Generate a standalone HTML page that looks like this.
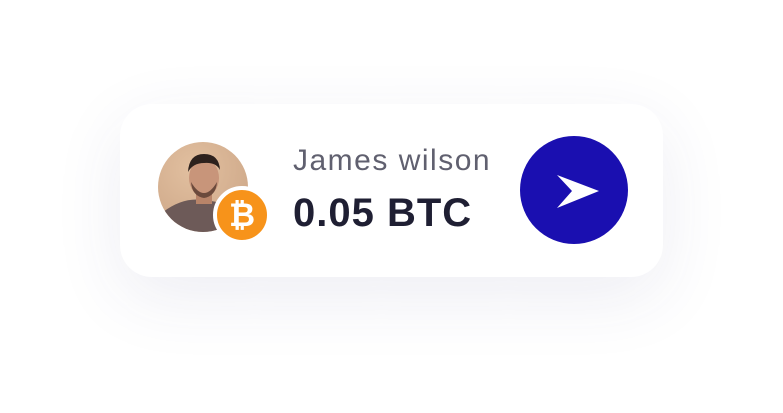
<!DOCTYPE html>
<html><head><style>
html,body{margin:0;padding:0;background:#fff;width:783px;height:413px;overflow:hidden;font-family:"Liberation Sans",sans-serif}
.card{position:absolute;left:120px;top:104px;width:543px;height:173px;background:#fff;border-radius:32px;box-shadow:0 20px 70px rgba(60,60,120,0.09)}
.av{position:absolute;left:158px;top:142px;width:90px;height:90px;border-radius:50%;overflow:hidden;background:radial-gradient(circle at 40% 30%,#e2c0a0,#c9a283)}
.badge{position:absolute;left:213px;top:186px;width:50px;height:50px;border-radius:50%;background:#f7931a;border:4px solid #fff;color:#fff;font-weight:bold;font-size:32px;text-align:center;line-height:50px}
.name{position:absolute;left:293px;top:144px;font-size:30px;color:#60606f;letter-spacing:1.5px}
.amt{position:absolute;left:293px;top:191px;font-size:40px;font-weight:bold;color:#1f1f33;letter-spacing:1px}
.btn{position:absolute;left:520px;top:136px;width:108px;height:108px;border-radius:50%;background:#1a0fb0}
</style></head><body>
<div class="card"></div>
<div class="av">
<svg width="90" height="90" viewBox="0 0 90 90">
<path d="M0 90 L5 70 Q25 55 45 58 Q70 60 85 72 L90 90Z" fill="#6d5a58"/>
<rect x="38" y="48" width="16" height="14" fill="#b88469"/>
<ellipse cx="46" cy="36" rx="15" ry="19" fill="#c8957a"/>
<path d="M30 30 Q31 12 46 12 Q61 12 62 28 Q58 20 46 21 Q35 21 30 30Z" fill="#2d211d"/>
<path d="M33 40 Q46 62 59 40 Q58 54 46 56 Q34 54 33 40Z" fill="#6b4a3c"/>
</svg>
</div>
<div class="badge">₿</div>
<div class="name">James wilson</div>
<div class="amt">0.05 BTC</div>
<div class="btn"><svg width="108" height="108" viewBox="0 0 108 108"><path d="M37 39 L79 55 L37 72 L52 55Z" fill="#fff"/></svg></div>
</body></html>
